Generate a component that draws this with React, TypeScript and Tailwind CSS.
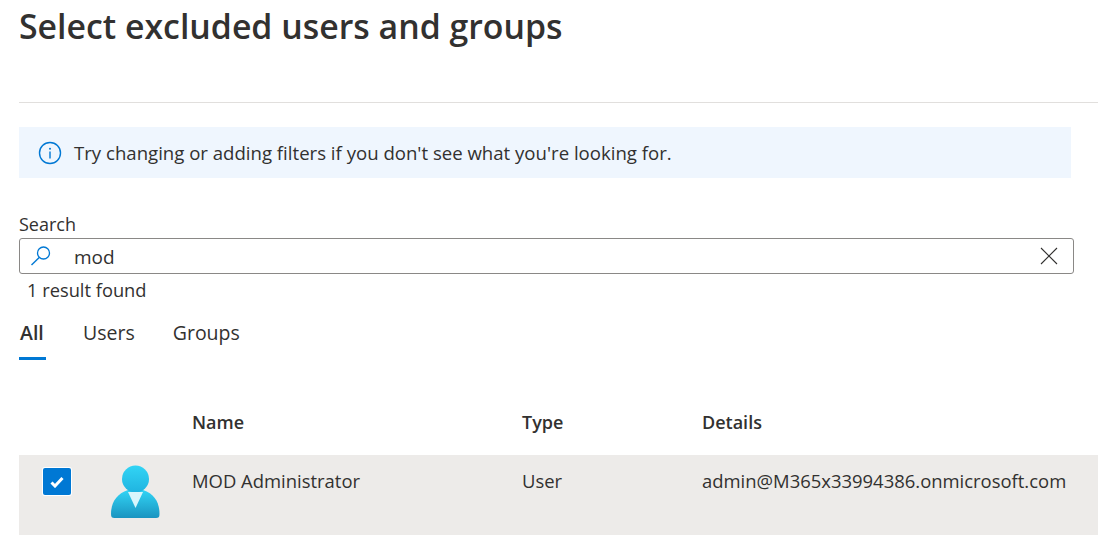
const fontStack = "font-['Open_Sans','Noto_Sans',sans-serif]"

function InfoIcon() {
  return (
    <svg width="24" height="24" viewBox="0 0 24 24" fill="none" className="shrink-0">
      <circle cx="12" cy="12" r="10.5" stroke="#0078d4" strokeWidth="1.4" />
      <rect x="11.3" y="10.5" width="1.4" height="7" fill="#0078d4" />
      <circle cx="12" cy="7.8" r="1" fill="#0078d4" />
    </svg>
  )
}

function SearchIcon() {
  return (
    <svg width="22" height="22" viewBox="0 0 22 22" fill="none">
      <circle cx="13.5" cy="8" r="6" stroke="#0078d4" strokeWidth="1.3" />
      <path d="M9.2 12.4 L1.5 20" stroke="#0078d4" strokeWidth="1.4" />
    </svg>
  )
}

function UserAvatar() {
  return (
    <svg width="50" height="54" viewBox="0 0 50 54">
      <defs>
        <linearGradient id="head" x1="0" y1="0" x2="0" y2="1">
          <stop offset="0" stopColor="#32d4f5" />
          <stop offset="1" stopColor="#20b4e0" />
        </linearGradient>
        <linearGradient id="body" x1="0" y1="0" x2="0" y2="1">
          <stop offset="0" stopColor="#32d4f5" />
          <stop offset="1" stopColor="#1a94c0" />
        </linearGradient>
      </defs>
      <path d="M0 49 C0 38 5 29 17 25 L32 25 C44 29 48.500 38 48.500 49 C48.500 52 47.500 53 45 53 L3.500 53 C1 53 0 52 0 49 Z" fill="url(#body)" />
      <circle cx="24.500" cy="14" r="13.500" fill="url(#head)" />
      <path d="M17 27 L32 27 L24.500 43 Z" fill="#d8f6fc" />
    </svg>
  )
}

export default function App() {
  return (
    <div className={`${fontStack} h-[544px] w-[1098px] overflow-hidden bg-white pl-[19px] text-[#323130]`}>
      <h1 className="flex h-[103px] border-b border-[#e1dfdd] pt-[5px] text-[33.85px] leading-[43px] font-semibold">
        Select excluded users and groups
      </h1>

      <div className="mt-[24px] flex h-[51px] w-[1052px] items-center gap-[12px] bg-[#eff6fe] pl-[19px] text-[18.6px]">
        <InfoIcon />
        <span>Try changing or adding filters if you don't see what you're looking for.</span>
      </div>

      <div className="mt-[33px] text-[18px] leading-[26px]">Search</div>
      <div className="mt-[1px] flex h-[36px] w-[1055px] items-center rounded-[3px] border border-[#8a8886] pr-[14px] pl-[10px]">
        <SearchIcon />
        <span className="ml-[22px] flex-1 pt-[2px] text-[19px]">mod</span>
        <svg width="20" height="20" viewBox="0 0 20 20" fill="none">
          <path d="M2 2 L18 18 M18 2 L2 18" stroke="#323130" strokeWidth="1.1" />
        </svg>
      </div>
      <div className="mt-[3px] pl-[8px] text-[18.3px] leading-[26px]">1 result found</div>

      <div className="mt-[16px] flex gap-[38px] text-[19.5px] leading-[28px]">
        <div className="-mr-px h-[41px] w-[27px] border-b-[3px] border-[#0078d4] pl-px font-semibold">All</div>
        <div>Users</div>
        <div>Groups</div>
      </div>

      <div className="mt-[48px] flex h-[47px] text-[18px] leading-[28px] font-semibold">
        <div className="w-[173px]" />
        <div className="w-[330px]">Name</div>
        <div className="w-[180px]">Type</div>
        <div>Details</div>
      </div>

      <div className="flex h-[80px] bg-[#edebe9] text-[18.45px] leading-[28px]">
        <div className="w-[92px] pt-[13px] pl-[24px]">
          <div className="flex h-[27px] w-[28px] items-center justify-center rounded-[2px] bg-[#0078d4] ring-1 ring-white">
            <svg width="14" height="12" viewBox="0 0 14 12" fill="none">
              <path d="M1.500 6.500 L5 10 L12.500 2" stroke="white" strokeWidth="3" />
            </svg>
          </div>
        </div>
        <div className="w-[81px] pt-[10px]">
          <UserAvatar />
        </div>
        <div className="w-[330px] pt-[12px]">MOD Administrator</div>
        <div className="w-[180px] pt-[12px]">User</div>
        <div className="pt-[12px]">admin@M365x33994386.onmicrosoft.com</div>
      </div>
    </div>
  )
}
